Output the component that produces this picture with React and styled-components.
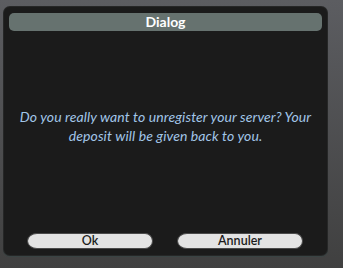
import styled, { createGlobalStyle } from 'styled-components'

const Global = createGlobalStyle`
  html, body { margin: 0; padding: 0; }
  body {
    width: 343px; height: 268px; overflow: hidden;
    background: linear-gradient(#5c5d61, #404040);
    font-family: Lato, "Open Sans", sans-serif;
  }
`

const Screen = styled.div`
  width: 343px; height: 268px; box-sizing: border-box;
  padding: 7px 16px 13px 4px;
  display: flex;
`

const Panel = styled.div`
  flex: 1;
  display: flex; flex-direction: column;
  background: #1b1b1b;
  border-radius: 6px;
  box-shadow: 0 0 0 1px #262727, 0 1px 0 1px #3a4444;
  padding: 6px 5px 6px 5px;
`

const TitleBar = styled.div`
  height: 18px;
  border-radius: 5px;
  background: #66726f;
  color: #fff;
  font-weight: 700;
  font-size: 14px;
  line-height: 18px;
  text-align: center;
`

const Message = styled.div`
  flex: 1;
  display: flex; align-items: center; justify-content: center;
  padding: 0 8px 12px 8px;
  color: #a2c6e8;
  font-style: italic;
  font-size: 14px;
  line-height: 19px;
  letter-spacing: 0.1px;
  text-align: center;
`

const Actions = styled.div`
  display: flex;
  gap: 24px;
  padding: 0 19px 0 18px;
`

const Button = styled.button`
  width: 126px; height: 16px;
  padding: 0;
  border: 1px solid #4a4a4a;
  border-radius: 10px 8px 8px 10px / 8px;
  background: #e3e3e3;
  color: #1c1c1c;
  font-family: inherit;
  font-size: 12.5px;
  line-height: 14px;
  font-weight: 600;
`

export default function App() {
  return (
    <>
      <Global />
      <Screen>
        <Panel>
          <TitleBar>Dialog</TitleBar>
          <Message>
            Do you really want to unregister your server? Your deposit will be given back to you.
          </Message>
          <Actions>
            <Button>Ok</Button>
            <Button>Annuler</Button>
          </Actions>
        </Panel>
      </Screen>
    </>
  )
}
